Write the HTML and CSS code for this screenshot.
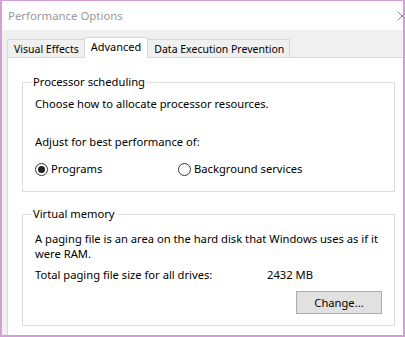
FILE: index.html
```html
<!doctype html>
<html lang="en">
    <head>
        <meta charset="UTF-8" />
        <title>Performance Options</title>
        <link rel="stylesheet" href="styles.css">
    </head>
    <body>
        <div class="window">
            <!-- Inactive title bar, close button cut by the crop -->
            <div class="titlebar">
                <span class="title">Performance Options</span>
                <svg class="close" width="6" height="10" viewBox="0 0 6 10">
                    <path d="M0.5 0.5 L9.5 9.5 M9.5 0.5 L0.5 9.5" stroke="#8a8a8a" stroke-width="1" fill="none" />
                </svg>
            </div>

            <div class="body">
                <div class="tabs">
                    <div class="tab">Visual Effects</div>
                    <div class="tab active">Advanced</div>
                    <div class="tab">Data Execution Prevention</div>
                </div>

                <div class="panel">
                    <fieldset class="group">
                        <legend>Processor scheduling</legend>
                        <p class="line">Choose how to allocate processor resources.</p>
                        <p class="line adjust">Adjust for best performance of:</p>
                        <div class="radios">
                            <label class="radio radio-programs"><span class="dot checked"></span>Programs</label>
                            <label class="radio"><span class="dot"></span>Background services</label>
                        </div>
                    </fieldset>

                    <fieldset class="group memory">
                        <legend>Virtual memory</legend>
                        <p class="line wrap">A paging file is an area on the hard disk that Windows uses as if it were RAM.</p>
                        <div class="size-row">
                            <span class="size-label">Total paging file size for all drives:</span>
                            <span>2432 MB</span>
                        </div>
                        <div class="actions">
                            <button class="button">Change...</button>
                        </div>
                    </fieldset>
                </div>
            </div>
        </div>
    </body>
</html>
```

FILE: styles.css
```css
:root {
    --frame: #d59ed8;
    --face: #f0f0f0;
    --edge: #d9d9d9;
    --group-edge: #dcdcdc;
    --text: #000;
    --title: #999;
}

html, body {
    margin: 0;
    padding: 0;
}
body {
    font-family: "Noto Sans", "Open Sans", sans-serif;
    font-size: 11.2px;
    line-height: 16px;
    color: var(--text);
    background: #fff;
}
.window {
    width: 405px;
    height: 337px;
    box-sizing: border-box;
    border: 1px solid var(--frame);
    border-width: 1px 2px 2px 2px;
    overflow: hidden;
    display: flex;
    flex-direction: column;
}
.titlebar {
    height: 29px;
    flex: none;
    background: #fff;
    display: flex;
    align-items: center;
    justify-content: space-between;
    padding-left: 6px;
}
.title {
    color: var(--title);
    font-size: 11.4px;
    padding-top: 1px;
}
.close {
    display: block;
    margin-top: 1px;
}
.body {
    flex: 1;
    background: var(--face);
    padding: 7px 0 0 5px;
    display: flex;
    flex-direction: column;
}
.tabs {
    display: flex;
    align-items: flex-end;
    height: 20px;
    position: relative;
    z-index: 1;
}
.tab {
    height: 18px;
    box-sizing: border-box;
    border: 1px solid var(--edge);
    border-bottom: none;
    background: var(--face);
    padding: 0 5px 0 6px;
    font-size: 10.5px;
    line-height: 19px;
    margin-top: 2px;
}
.tab + .tab {
    margin-left: -1px;
}
.tab.active {
    height: 21px;
    background: #fff;
    padding: 0 6px;
    font-size: 11px;
    line-height: 18px;
    margin-bottom: -1px;
}
.panel {
    flex: 1;
    background: #fff;
    border: 1px solid var(--edge);
    border-right: none;
    border-bottom: none;
    padding: 16px 8px 0 14px;
}
.group {
    margin: 0;
    border: 1px solid var(--group-edge);
    padding: 6px 12px 14px 12px;
}
.group legend {
    padding: 0 2px;
    margin-left: -4px;
}
.line {
    margin: 0;
}
.wrap {
    line-height: 15px;
}
.adjust {
    margin-top: 22px;
}
.radios {
    display: flex;
    margin-top: 11px;
}
.radio {
    display: flex;
    align-items: center;
}
.radio-programs {
    width: 143px;
}
.dot {
    width: 13px;
    height: 13px;
    box-sizing: border-box;
    border: 1px solid #333;
    border-radius: 50%;
    margin-right: 3px;
    display: flex;
    align-items: center;
    justify-content: center;
}
.dot.checked::after {
    content: "";
    width: 7px;
    height: 7px;
    border-radius: 50%;
    background: #222;
}
.memory {
    margin-top: 14px;
    padding-top: 9px;
    padding-bottom: 11px;
}
.size-row {
    display: flex;
    margin-top: 6px;
}
.size-label {
    width: 232px;
}
.actions {
    display: flex;
    justify-content: flex-end;
    margin-top: 8px;
}
.button {
    font: inherit;
    width: 86px;
    height: 23px;
    background: #e1e1e1;
    border: 1px solid #adadad;
    color: #000;
    padding: 0;
}
```
